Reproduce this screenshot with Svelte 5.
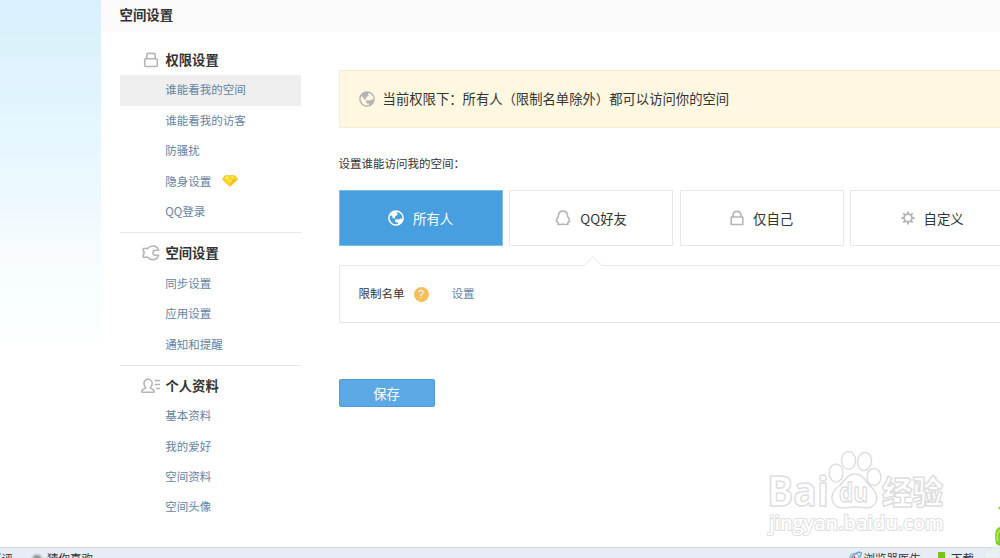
<script lang="ts">
	interface NavGroup {
		title: string;
		icon: 'lock' | 'wrench' | 'profile';
		items: { label: string; vip?: boolean }[];
	}

	const groups: NavGroup[] = [
		{
			title: '权限设置',
			icon: 'lock',
			items: [
				{ label: '谁能看我的空间' },
				{ label: '谁能看我的访客' },
				{ label: '防骚扰' },
				{ label: '隐身设置', vip: true },
				{ label: 'QQ登录' }
			]
		},
		{
			title: '空间设置',
			icon: 'wrench',
			items: [{ label: '同步设置' }, { label: '应用设置' }, { label: '通知和提醒' }]
		},
		{
			title: '个人资料',
			icon: 'profile',
			items: [{ label: '基本资料' }, { label: '我的爱好' }, { label: '空间资料' }, { label: '空间头像' }]
		}
	];

	const options = [
		{ id: 'globe', label: '所有人' },
		{ id: 'penguin', label: 'QQ好友' },
		{ id: 'padlock', label: '仅自己' },
		{ id: 'gear', label: '自定义' }
	];

	let activeItem = $state('谁能看我的空间');
	let selected = $state('globe');
</script>

{#snippet globe()}
	<svg class="icon-globe" viewBox="0 0 16 16">
		<circle cx="8" cy="8" r="7.100" fill="none" stroke="currentColor" stroke-width="1.500" />
		<path d="M1 7C1.200 3.500 4 1 7.500.8L9.500 1.500 9 3 9.800 4.300 8.500 5.600 7.300 6.200 6.800 8.800 4.800 8 3.800 5.800 2.500 5.300zM6.800 10L8.500 9.300 11 9.600 12.500 8.500 15 8.800C14.600 12 12.500 14.700 9.500 15.200L10.300 12.800 7.600 12.300z" fill="currentColor" />
	</svg>
{/snippet}

<div class="shell">
	<div class="backdrop"></div>

	<div class="page">
		<header class="page-header">空间设置</header>

		<div class="columns">
			<nav class="side-nav">
				{#each groups as group (group.title)}
					<section class="group">
						<h3 class="group-title">
							<span class="group-icon">
								{#if group.icon === 'lock'}
									<svg width="16" height="16" viewBox="0 0 16 16">
										<rect x="1.7" y="6.7" width="12.6" height="7.8" rx="1" />
										<path d="M3.8 6.500V2.700Q3.800 1.400 5.100 1.400H10.900Q12.200 1.400 12.200 2.700V6.500" />
									</svg>
								{:else if group.icon === 'wrench'}
									<svg width="18" height="16" viewBox="0 0 18 16">
										<path d="M1.300 3.500H5.800C7.200 1.700 8.900 1 10.900 1 13.500 1 15.800 2.600 16.600 5.200H13.200Q11 5.400 11 7.900T13.200 10.300H16.600C15.800 13 13.500 14.700 10.900 14.700 8.900 14.700 7.200 13.900 5.800 12.200H1.300V9.500L2 9V6.700L1.300 6.200z" />
									</svg>
								{:else}
									<svg width="20" height="16" viewBox="0 0 20 16">
										<path d="M4.900 9.600C3.400 8.500 3 7 3 5.400 3 3 4.800 1.300 7.100 1.300S11.200 3 11.200 5.400C11.200 7 10.700 8.500 9.200 9.600L13 12.300V14.200H1V12.300zM13.500 2.500H19M13.500 6.500H19M15 10.500H19" />
									</svg>
								{/if}
							</span>
							{group.title}
						</h3>
						<ul>
							{#each group.items as item (item.label)}
								<li class:active={activeItem === item.label}>
									<button onclick={() => (activeItem = item.label)}>{item.label}</button>
									{#if item.vip}
										<svg class="diamond" viewBox="0 0 16 12">
											<path d="M3.2.7H12.8L15.6 4.2 8 11.5.4 4.2z" fill="#ffd51d" stroke="#e8b018" stroke-width=".7" />
											<path d="M4.2 1.5H7L5.5 4H2.3zM8.7 1.5H11.7L10.8 4z" fill="#fff27b" />
											<path d="M5.3 4.2H10.7L8 10.5z" fill="#ffe13d" />
											<path d="M10.7 4.2H14.8L8 10.8z" fill="#f8b816" />
										</svg>
									{/if}
								</li>
							{/each}
						</ul>
					</section>
				{/each}
			</nav>

			<main class="content">
				<div class="notice">
					{@render globe()}
					<span>当前权限下：所有人（限制名单除外）都可以访问你的空间</span>
				</div>

				<p class="question">设置谁能访问我的空间：</p>

				<div class="options">
					{#each options as opt (opt.id)}
						<button class="option {opt.id}" class:selected={selected === opt.id} onclick={() => (selected = opt.id)}>
							{#if opt.id === 'globe'}
								{@render globe()}
							{:else if opt.id === 'penguin'}
								<svg width="16" height="16" viewBox="0 0 16 16">
									<path d="M8 1.1C5.100 1.100 3.500 3 3.500 5.500 3.500 7.200 1.500 8.500 1.300 11.200L2.500 12 3.400 13.200 3.100 14.500H6.600L8 14.100 9.400 14.500H12.900L12.600 13.200 13.500 12 14.700 11.200C14.500 8.500 12.500 7.200 12.500 5.500 12.500 3 10.900 1.100 8 1.100z" />
								</svg>
							{:else if opt.id === 'padlock'}
								<svg width="14" height="16" viewBox="0 0 14 16">
									<rect x="1.2" y="7" width="11.6" height="7.5" />
									<path d="M3 7V5.2Q3 1.4 7 1.4T11 5.2V7" />
								</svg>
							{:else}
								<svg width="14" height="14" viewBox="0 0 14 14">
									<circle cx="7" cy="7" r="3.9" stroke-width="1.9" />
									<path d="M7 .4V3M7 11V13.6M.4 7H3M11 7H13.6M2.3 2.3L4 4M10 10L11.7 11.7M2.3 11.7L4 10M10 4L11.7 2.3" stroke-width="1.8" />
								</svg>
							{/if}
							<span>{opt.label}</span>
						</button>
					{/each}
				</div>

				<div class="panel">
					<svg class="pointer" viewBox="0 0 20 11">
						<path d="M0 10.5L10 .8 20 10.5" fill="#fff" stroke="#e8e8e8" />
					</svg>
					<span>限制名单</span>
					<i class="help">?</i>
					<a href="#set">设置</a>
				</div>

				<button class="save">保存</button>
			</main>
		</div>
	</div>

	<footer class="status-bar">
		<span class="clip-left">好评</span>
		<i class="dot"></i>
		<span>猜你喜欢</span>
		<span class="spacer"></span>
		<svg class="doctor" viewBox="0 0 14 14">
			<circle cx="6.5" cy="7.5" r="5" fill="#f7fbff" stroke="#9dbcdc" stroke-width="1.5" />
			<path d="M3 7Q9 0 13 1.5 14 5 9 8" fill="none" stroke="#6aa2d8" stroke-width="1.3" />
			<path d="M6.5 5V10M4 7.5H9" stroke="#d84343" stroke-width="1.4" />
		</svg>
		<span>浏览器医生</span>
		<i class="green-block"></i>
		<span>下载</span>
	</footer>

	<svg class="watermark" viewBox="0 0 184 92">
		<g class="paw">
			<ellipse cx="69" cy="27" rx="7" ry="9" />
			<ellipse cx="81.5" cy="14.500" rx="7" ry="9" />
			<ellipse cx="97.5" cy="15.500" rx="7" ry="9" transform="rotate(8 97.5 15.5)" />
			<ellipse cx="107" cy="31" rx="7" ry="8.5" />
			<path d="M88 28C80 28 77 36 72 40 64 46 63 54 68 59 73 64 80 61 88 61S102 64 107 59C112 54 110 46 103 40 98 35 96 28 88 28z" />
		</g>
		<text class="brand" x="0" y="60" textLength="62" lengthAdjust="spacingAndGlyphs">Bai</text>
		<text class="brand du" x="72" y="56" textLength="29" lengthAdjust="spacingAndGlyphs">du</text>
		<text class="brand cn" x="115" y="58" textLength="61" lengthAdjust="spacingAndGlyphs">经验</text>
		<text class="site" x="2" y="83.5" textLength="175" lengthAdjust="spacingAndGlyphs">jingyan.baidu.com</text>
	</svg>

	<svg class="mascot" viewBox="0 0 16 58">
		<path d="M14 8L16 6V10z" fill="#9bd944" />
		<path d="M16 27Q9 29 12 44L16 46z" fill="#80cf2d" />
		<path d="M16 30Q12 34 14 41" fill="none" stroke="#b9ec6d" stroke-width="1.5" />
		<path d="M0 58Q-1 50 6 50 8 46 16 47V58z" fill="#eaf1f4" stroke="#dde6ea" />
	</svg>
</div>

<style>
	:global(body) {
		margin: 0;
		background: #fff;
	}

	.shell {
		position: relative;
		display: grid;
		grid-template: 547px 11px / 101px 899px;
		width: 1000px;
		height: 558px;
		overflow: hidden;
		color: #333;
		font: 11.5px/16px 'Noto Sans CJK SC', sans-serif;
	}

	.backdrop {
		height: 342px;
		background: linear-gradient(
			#d8efff 0,
			#d9f0fd 16px,
			#daf2fa 40px,
			#dcf2fb 54px,
			#e0f3fe 66px,
			#dff3fd 90px,
			#e4f6fe 120px,
			#e8f7ff 150px,
			#ebf9ff 190px,
			#f0f8ff 208px,
			#f2fafe 225px,
			#f7fbff 250px,
			#f8feff 280px,
			#faffff 320px,
			#fdffff 342px
		);
	}

	.page {
		min-width: 0;
		overflow: hidden;
	}

	.page-header {
		height: 32px;
		padding-left: 18.5px;
		box-sizing: border-box;
		background: #fafafa;
		font-size: 13.4px;
		font-weight: 700;
		line-height: 29px;
	}

	.columns {
		display: flex;
		gap: 37.6px;
		padding: 12.8px 0 0 19px;
	}

	.side-nav {
		flex: 0 0 181px;
	}

	.group + .group {
		margin-top: 5px;
		padding-top: 5px;
		border-top: 1px solid #e8e8e8;
	}

	.group-title {
		display: flex;
		align-items: center;
		height: 30.4px;
		margin: 0;
		font-size: 13.3px;
		font-weight: 700;
	}

	.group-icon {
		display: flex;
		justify-content: center;
		width: 20px;
		margin: 0 5px 0 20.5px;
	}

	svg {
		flex: none;
	}

	.group-icon svg,
	.option > svg:not(.icon-globe) {
		fill: none;
		stroke: #b5b5b5;
		stroke-width: 1.6;
		stroke-linejoin: round;
	}

	ul {
		margin: 0;
		padding: 0;
		list-style: none;
	}

	li {
		display: flex;
		align-items: center;
		height: 30.4px;
		padding: 0 0 2px 45.2px;
		box-sizing: border-box;
	}

	li.active {
		background: #efefef;
	}

	button {
		padding: 0;
		border: 0;
		background: none;
		color: inherit;
		font: inherit;
		cursor: pointer;
	}

	li button,
	.panel a {
		color: #6483a5;
		text-decoration: none;
	}

	.diamond {
		width: 16px;
		height: 12px;
		margin-left: 11px;
	}

	.content {
		flex: 0 0 700px;
		padding-top: 25.2px;
	}

	.notice {
		display: flex;
		align-items: center;
		height: 58px;
		padding-left: 19px;
		box-sizing: border-box;
		border: 1px solid #f6edcc;
		background: #fff8e1;
		font-size: 13.33px;
	}

	.icon-globe {
		width: 16px;
		height: 16px;
	}

	.notice .icon-globe {
		margin-right: 8px;
		color: #b5b5b5;
	}

	.question {
		margin: 27px 0 19px;
	}

	.options {
		display: flex;
		gap: 6.5px;
	}

	.option {
		display: flex;
		align-items: center;
		justify-content: center;
		gap: 9px;
		flex: 0 0 164px;
		height: 56px;
		box-sizing: border-box;
		border: 1px solid #e8e8e8;
		background: #fff;
		font-size: 13.4px;
	}

	.option.selected {
		border-color: #7dbbea;
		background: #489fe0;
		color: #fff;
	}

	.option svg {
		margin-top: 1px;
	}

	.panel {
		position: relative;
		display: flex;
		align-items: center;
		height: 58px;
		margin-top: 19px;
		padding-left: 19px;
		box-sizing: border-box;
		border: 1px solid #e8e8e8;
	}

	.panel > span,
	.panel > a {
		margin-bottom: 1px;
	}

	.pointer {
		position: absolute;
		top: -10px;
		left: 243px;
		width: 20px;
		height: 11px;
	}

	.help {
		width: 15px;
		height: 15px;
		margin: 1px 23px 0 9px;
		border-radius: 50%;
		background: #f5c05b;
		color: #fff;
		font: 11px/15px 'Liberation Sans', sans-serif;
		text-align: center;
	}

	.save {
		display: block;
		width: 96px;
		height: 28px;
		margin-top: 56.4px;
		padding-top: 1px;
		border: 1px solid #4c9bdb;
		border-radius: 2px;
		background: #5ca9e6;
		color: #fff;
		font-size: 13.3px;
	}

	.status-bar {
		grid-column: 1 / -1;
		display: flex;
		align-items: flex-start;
		box-sizing: border-box;
		padding: 2px 26px 0 0;
		border-top: 1px solid #cfdad9;
		background: #e8edf5;
		overflow: hidden;
	}

	.clip-left {
		margin-left: -10px;
	}

	.dot {
		width: 8px;
		height: 8px;
		margin: 3px 4px 0 18px;
		border: 2px solid #d2d5d8;
		border-radius: 50%;
		background: #9da1a4;
	}

	.spacer {
		flex: 1;
	}

	.doctor {
		width: 14px;
		height: 14px;
		margin: 1px 2px 0 0;
	}

	.green-block {
		width: 7px;
		height: 12px;
		margin: 2px 6px 0 17px;
		background: #75c51d;
	}

	.watermark {
		position: absolute;
		left: 767px;
		top: 446px;
		width: 184px;
		height: 92px;
		fill: #fff;
		stroke: #dedede;
		stroke-width: 1.5;
		stroke-linejoin: round;
	}

	.brand,
	.site {
		font-family: 'Open Sans', 'Liberation Sans', sans-serif;
		font-weight: 700;
	}

	.brand {
		font-size: 41px;
	}

	.brand.du {
		font-size: 27px;
	}

	.brand.cn {
		font: 900 32px 'Noto Sans CJK SC', sans-serif;
	}

	/* outline sits behind the fill so the thin letters stay white */
	.site {
		font-size: 20px;
		font-weight: 600;
		stroke-width: 2;
		paint-order: stroke;
	}

	.mascot {
		position: absolute;
		right: 0;
		bottom: 0;
		width: 16px;
		height: 58px;
	}
</style>
